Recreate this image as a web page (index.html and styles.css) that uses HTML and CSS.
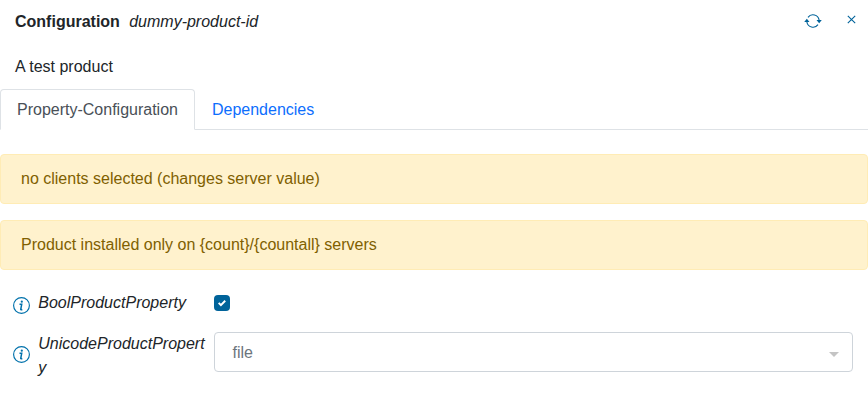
FILE: index.html
```html
<!DOCTYPE html>
<html lang="en">
<head>
<meta charset="utf-8">
<title>Configuration</title>
<link rel="stylesheet" href="styles.css">
</head>
<body>
<header class="header">
  <b>Configuration</b><i class="product-id">dummy-product-id</i>
  <button class="icon-button refresh" aria-label="Refresh"><svg width="18" height="18" viewBox="0 0 18 18" fill="none" stroke="currentColor" stroke-width="1.150"><path d="M4 5.300a6.200 6.200 0 0 1 11.100 2.700M14 12.700a6.200 6.200 0 0 1-11.100-2.700"/><path d="M12.500 8h5.300l-2.650 3.200zM.2 10h5.300l-2.650-3.200z" fill="currentColor" stroke="none"/></svg></button>
  <button class="icon-button close" aria-label="Close"><svg width="9" height="9" viewBox="0 0 9 9" fill="none" stroke="currentColor" stroke-width="1.100"><path d="M.8.8l7.400 7.400M8.200.8l-7.400 7.400"/></svg></button>
</header>
<p class="description">A test product</p>
<nav class="tabs"><a class="tab active">Property-Configuration</a><a class="tab">Dependencies</a></nav>
<div class="alert">no clients selected (changes server value)</div>
<div class="alert">Product installed only on {count}/{countall} servers</div>
<div class="row row-bool">
  <svg class="info" viewBox="0 0 17 17" fill="none" stroke="currentColor"><circle cx="8.500" cy="8.500" r="7.900" stroke-width="1.150"/><circle cx="8.800" cy="4.700" r="1.100" fill="currentColor" stroke="none"/><path d="M6.500 7.300h2.200L7.700 12.500q.1.700 1.600 0" stroke-width="1.500"/></svg>
  <label class="label">BoolProductProperty</label>
  <span class="checkbox"><svg width="10" height="10" viewBox="0 0 10 10" fill="none" stroke="#fff" stroke-width="2"><path d="M1.700 4.900l2.200 2.200 4.300-4.300"/></svg></span>
</div>
<div class="row row-unicode">
  <svg class="info" viewBox="0 0 17 17" fill="none" stroke="currentColor"><circle cx="8.500" cy="8.500" r="7.900" stroke-width="1.150"/><circle cx="8.800" cy="4.700" r="1.100" fill="currentColor" stroke="none"/><path d="M6.500 7.300h2.200L7.700 12.500q.1.700 1.600 0" stroke-width="1.500"/></svg>
  <label class="label">UnicodeProductProperty</label>
  <div class="select">file<span class="caret"></span></div>
</div>
</body>
</html>
```
FILE: styles.css
```css
* { box-sizing: border-box; }
body { margin: 0; font: 16px/24px "Liberation Sans", Arial, sans-serif; color: #212529; background: #fff; }
.header { display: flex; height: 43px; padding: 10px 12px 0 15px; }
.product-id { margin-left: 9.3px; }
.icon-button { display: flex; padding: 0; border: 0; background: none; color: #00639a; }
.refresh { margin: 2px 0 0 auto; height: 18px; }
.close { margin: 5px 0 0 25px; height: 9px; }
.description { margin: 12px 15px 10px; }
.tabs { display: flex; height: 41px; border-bottom: 1px solid #dee2e6; margin-bottom: 24px; }
.tab { height: 41px; padding: 8px 16px; border: 1px solid transparent; border-radius: 4px 4px 0 0; color: #0d6efd; }
.active { color: #495057; background: #fff; border-color: #dee2e6 #dee2e6 #fff; }
.alert { height: 50px; margin-bottom: 16px; padding: 12px 20px; border: 1px solid #ffecb5; border-radius: 4px; background: #fff2cd; color: #806000; }
.row { display: flex; padding: 0 15px 0 13px; }
.row-bool { height: 46px; padding-top: 5px; }
.info { flex: none; width: 17px; height: 17px; margin-top: 5.500px; color: #0071ab; }
.label { width: 168px; margin-left: 8.300px; margin-right: -.3px; font-style: italic; overflow-wrap: anywhere; }
.checkbox { display: flex; align-items: center; justify-content: center; width: 16px; height: 16px; margin: 4px 0 0 8px; border-radius: 4px; background: #00639a; }
.row-unicode .info { margin-top: 14px; }
.select { display: flex; flex: 1; align-items: center; justify-content: space-between; height: 40px; margin-left: 8px; padding: 2px 13px 0 17.500px; border: 1px solid #ced4da; border-radius: 4px; color: #6c757d; }
.caret { border: 5px solid transparent; border-top-color: #c4c4c4; border-bottom: 0; margin-top: 2px; }
```
